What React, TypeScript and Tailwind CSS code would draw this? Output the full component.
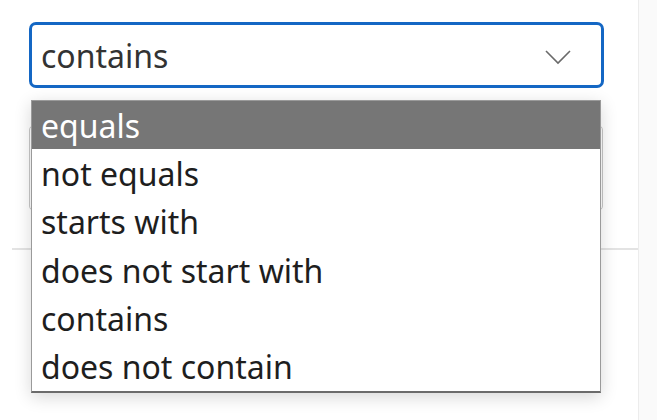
import * as React from 'react';

const OPTIONS = ['equals', 'not equals', 'starts with', 'does not start with', 'contains', 'does not contain'];

export default function App() {
  const [value] = React.useState('contains');
  const [active] = React.useState('equals');

  return (
    <div className="relative w-[657px] h-[420px] bg-white overflow-hidden font-['Noto_Sans','Open_Sans',sans-serif] text-[#242424]">
      {/* right side panel edge */}
      <div className="absolute top-0 right-0 w-[19px] h-full bg-[#fafafa] border-l border-[#ececec]" />

      <div className="flex flex-col w-[638px]">
        {/* select */}
        <div className="pt-[22px] pl-[29px]">
          <div className="w-[575px] h-[66px] border-[3px] border-[#1467c4] rounded-[7px] flex items-center justify-between pl-[9px] pr-[30px] bg-white">
            <span className="text-[32px] leading-none text-[#333] mt-[2px]">{value}</span>
            <svg width="26" height="16" viewBox="0 0 26 16" fill="none" className="mt-[4px]">
              <path d="M1 2 L13 14 L25 2" stroke="#6a6a6a" strokeWidth="1.6" />
            </svg>
          </div>
        </div>

        {/* input behind the menu */}
        <div className="pt-[37px] pl-[29px]">
          <div className="w-[574px] h-[86px] border border-[#c8c8c8] rounded-[5px]" />
        </div>

        {/* divider */}
        <div className="mt-[37px] ml-[12px] h-[2px] bg-[#e3e3e3]" />
      </div>

      {/* dropdown menu */}
      <div className="absolute left-[31px] top-[100px] w-[570px] bg-white border border-[#9a9a9a] border-b-2 border-b-[#6b6b6b] shadow-[0_4px_16px_rgba(0,0,0,0.16)]">
        {OPTIONS.map((opt) => (
          <div
            key={opt}
            className={`h-[48.3px] flex items-center pl-[9px] text-[32px] leading-none ${opt === active ? 'bg-[#767676] text-white' : 'text-[#1e1e1e]'}`}
          >
            <span className="mt-[1px]">{opt}</span>
          </div>
        ))}
      </div>
    </div>
  );
}
